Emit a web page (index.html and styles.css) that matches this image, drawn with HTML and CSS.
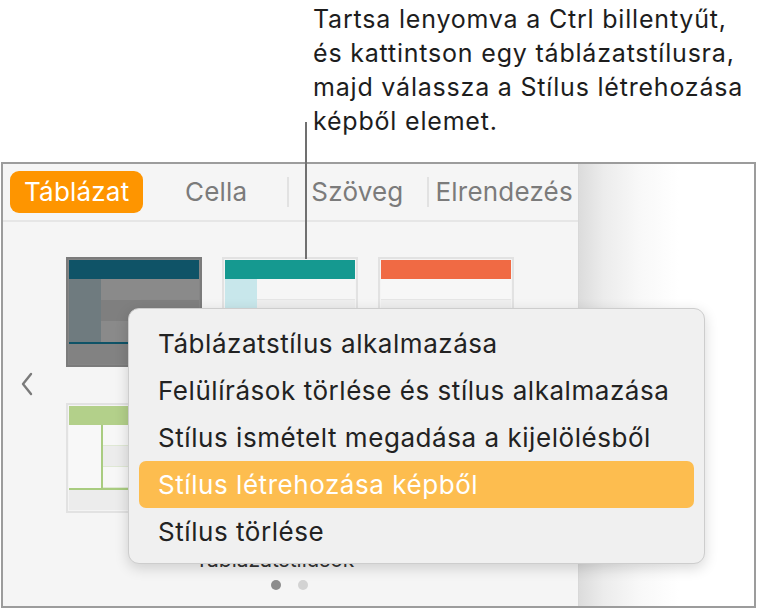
FILE: index.html
```html
<!DOCTYPE html>
<html lang="hu">
<head>
<meta charset="utf-8">
<link rel="stylesheet" href="styles.css">
</head>
<body>
<p class="caption">Tartsa lenyomva a Ctrl billentyűt,<br>és kattintson egy táblázatstílusra,<br>majd válassza a Stílus létrehozása<br>képből elemet.</p>
<div class="callout"></div>
<div class="frame">
  <div class="panel">
    <div class="tabs">
      <span class="tab active">Táblázat</span>
      <span class="tab cella">Cella</span>
      <span class="sep"></span>
      <span class="tab szoveg">Szöveg</span>
      <span class="sep"></span>
      <span class="tab elr">Elrendezés</span>
    </div>
    <div class="styles">
      <div class="chev"><svg width="14" height="24" viewBox="0 0 14 24"><path d="M11 2 L3 12 L11 22" fill="none" stroke="#7a7a7a" stroke-width="2.4" stroke-linecap="round" stroke-linejoin="round"/></svg></div>
      <div class="grid">
        <div class="thumb t1">
          <div class="hd"></div>
          <div class="bd">
            <div class="col1"></div>
            <div class="rows"><div class="r a"></div><div class="r b"></div><div class="r a"></div></div>
          </div>
          <div class="line"></div>
          <div class="ft"></div>
        </div>
        <div class="thumb t2">
          <div class="hd"></div>
          <div class="bd">
            <div class="col1"></div>
            <div class="rows"><div class="r a"></div><div class="r b"></div><div class="r a"></div></div>
          </div>
        </div>
        <div class="thumb t3">
          <div class="hd"></div>
          <div class="bd">
            <div class="rows"><div class="r a"></div><div class="r b"></div><div class="r a"></div></div>
          </div>
        </div>
        <div class="thumb t4">
          <div class="hd"></div>
          <div class="bd">
            <div class="col1"></div>
            <div class="rows"><div class="r a"></div><div class="r b"></div><div class="r a"></div></div>
          </div>
          <div class="line"></div>
          <div class="ft"></div>
        </div>
      </div>
      <div class="label">Táblázatstílusok</div>
      <div class="dots"><span class="dot on"></span><span class="dot"></span></div>
    </div>
  </div>
  <div class="canvas"></div>
</div>
<div class="menu">
  <div class="item">Táblázatstílus alkalmazása</div>
  <div class="item">Felülírások törlése és stílus alkalmazása</div>
  <div class="item">Stílus ismételt megadása a kijelölésből</div>
  <div class="item hl">Stílus létrehozása képből</div>
  <div class="item">Stílus törlése</div>
</div>
</body>
</html>
```
FILE: styles.css
```css
html, body {
  margin: 0;
  padding: 0;
  background: #ffffff;
  font-family: Inter, "Noto Sans", "Liberation Sans", sans-serif;
  overflow: hidden;
}
body {
  width: 766px;
  height: 611px;
  position: relative;
}
.caption {
  margin: 0 0 0 313px;
  padding-top: 2px;
  font-size: 25px;
  letter-spacing: 0.8px;
  line-height: 34px;
  color: #1d1d1d;
  height: 161px;
  box-sizing: border-box;
  white-space: nowrap;
}
.callout {
  position: absolute;
  left: 305px;
  top: 122px;
  width: 2px;
  height: 137px;
  background: #707070;
  z-index: 2;
}
.frame {
  margin-left: 1px;
  margin-top: 1px;
  width: 755px;
  height: 446px;
  box-sizing: border-box;
  border: 2px solid #9c9c9c;
  display: flex;
}
.panel {
  width: 575px;
  background: #f5f5f5;
  border-right: 1px solid #d8d8d8;
  display: flex;
  flex-direction: column;
}
.canvas {
  flex: 1;
  background: linear-gradient(to right, #dcdcdc 0px, #ececec 25px, #f8f8f8 60px, #ffffff 100px);
}
.tabs {
  height: 56px;
  border-bottom: 2px solid #e6e6e6;
  display: flex;
  align-items: center;
  padding-left: 7px;
}
.tab {
  font-size: 26px;
  letter-spacing: 0.2px;
  color: #7b7b7b;
  line-height: 42px;
  white-space: nowrap;
}
.tab.active {
  background: #fe9500;
  color: #ffffff;
  border-radius: 9px;
  padding: 0 13px 0 14px;
  width: 133px;
  box-sizing: border-box;
}
.tab.cella { margin-left: 42px; margin-right: 40px; }
.tab.szoveg { margin-left: 22px; margin-right: 23px; }
.tab.elr { margin-left: 7px; }
.sep {
  width: 2px;
  height: 30px;
  background: #e2e2e2;
  flex-shrink: 0;
}
.styles {
  flex: 1;
  position: relative;
  padding: 35px 0 0 63px;
}
.chev {
  position: absolute;
  left: 17px;
  top: 150px;
}
.grid {
  display: grid;
  grid-template-columns: repeat(3, 136px);
  grid-auto-rows: 110px;
  column-gap: 20px;
  row-gap: 36px;
}
.thumb {
  box-sizing: border-box;
  border: 2px solid #e2e2e2;
  display: flex;
  flex-direction: column;
  background: #f4f4f4;
  padding: 1px;
}
.thumb .hd { height: 19px; }
.thumb .bd { display: flex; height: 63px; }
.thumb .col1 { width: 32px; }
.thumb .rows { flex: 1; display: flex; flex-direction: column; }
.thumb .r { flex: 1; }
.thumb .line { height: 2px; }
.thumb .ft { flex: 1; }

.t1 { border-color: #7b7b7b; background: #858585; }
.t1 .hd { background: #0f5367; }
.t1 .col1 { background: #6f7b7f; }
.t1 .r.a { background: #8a8a8a; }
.t1 .r.b { background: #7f7f7f; }
.t1 .line { background: #0f5367; }
.t1 .ft { background: #828282; }

.t2 .hd { background: #159990; }
.t2 .col1 { background: #c8e7eb; }
.t2 .r.a { background: #f6f6f6; border-bottom: 1px solid #e6e6e6; }
.t2 .r.b { background: #eeeeee; }

.t3 .hd { background: #f06a44; }
.t3 .r.a { background: #f7f7f7; border-bottom: 1px solid #e6e6e6; }
.t3 .r.b { background: #efefef; }

.t4 .hd { background: #b3d08a; }
.t4 .col1 { background: #f8f8f8; border-right: 2px solid #a9cc80; }
.t4 .r.a { background: #f7f7f7; border-bottom: 1px solid #dfe8d4; }
.t4 .r.b { background: #ececec; border-bottom: 1px solid #dfe8d4; }
.t4 .line { background: #a9cc80; }
.t4 .ft { background: #ececec; }

.label {
  position: absolute;
  left: 192px;
  top: 326px;
  font-size: 21px;
  line-height: 24px;
  color: #333;
}
.dots {
  position: absolute;
  left: 268px;
  top: 358px;
  display: flex;
  gap: 17px;
}
.dot {
  width: 10px;
  height: 10px;
  border-radius: 50%;
  background: #d3d3d3;
}
.dot.on { background: #8c8c8c; }

.menu {
  position: absolute;
  left: 128px;
  top: 308px;
  width: 577px;
  height: 256px;
  box-sizing: border-box;
  background: #f0f0f0;
  border: 1px solid #cdcdcd;
  border-radius: 11px;
  box-shadow: 0 4px 14px rgba(0,0,0,0.16);
  padding: 11px 10px 0 10px;
  z-index: 3;
}
.item {
  height: 47px;
  line-height: 47px;
  font-size: 26px;
  letter-spacing: 0.55px;
  color: #222;
  padding-left: 19px;
  border-radius: 7px;
  white-space: nowrap;
}
.item.hl {
  background: #fdbd4f;
  color: #ffffff;
}
```
